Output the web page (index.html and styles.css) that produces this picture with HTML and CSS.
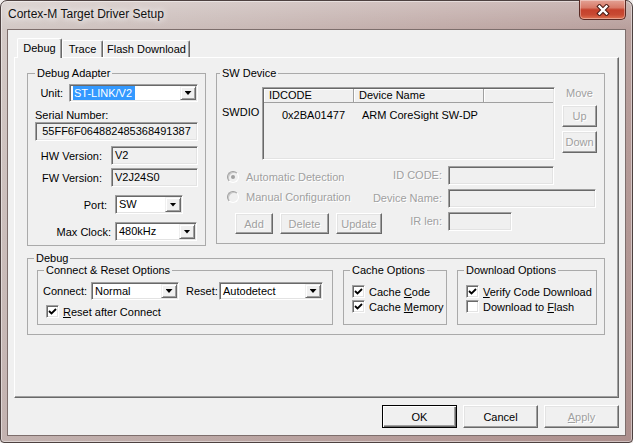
FILE: index.html
```html
<!DOCTYPE html>
<html lang="en">
<head>
    <meta charset="UTF-8">
    <title>Cortex-M Target Driver Setup</title>
    <link rel="stylesheet" href="styles.css">
</head>
<body>
<div class="window">
    <div class="titlebar">
        <span class="title">Cortex-M Target Driver Setup</span>
        <div class="close-btn">
            <svg width="14" height="12" viewBox="0 0 14 12">
                <path d="M3.5 2.5 L10.5 9.5 M10.5 2.5 L3.5 9.5" stroke="#4b1c16" stroke-width="4.4" stroke-linecap="square"/>
                <path d="M3.5 2.5 L10.5 9.5 M10.5 2.5 L3.5 9.5" stroke="#fff" stroke-width="2.4" stroke-linecap="square"/>
            </svg>
        </div>
    </div>

    <div class="client">
        <div class="tabs">
            <div class="tab active tab-debug">Debug</div>
            <div class="tab tab-trace">Trace</div>
            <div class="tab tab-flash">Flash Download</div>
        </div>

        <div class="page">
            <div class="top-row">
                <!-- Debug Adapter -->
                <fieldset class="group adapter">
                    <legend>Debug Adapter</legend>
                    <div class="body">
                        <div class="row r-unit">
                            <span class="lbl lbl-unit">Unit:</span>
                            <div class="combo sunken w-unit">
                                <span class="value"><span class="hilite">ST-LINK/V2</span></span>
                                <span class="drop"></span>
                            </div>
                        </div>
                        <div class="serial-label">Serial Number:</div>
                        <div class="field sunken serial">55FF6F064882485368491387</div>
                        <div class="row r-hw">
                            <span class="lbl lbl-ver">HW Version:</span>
                            <div class="field sunken w-ver">V2</div>
                        </div>
                        <div class="row r-fw">
                            <span class="lbl lbl-ver">FW Version:</span>
                            <div class="field sunken w-ver">V2J24S0</div>
                        </div>
                        <div class="row r-port">
                            <span class="lbl lbl-port">Port:</span>
                            <div class="combo sunken w-port">
                                <span class="value">SW</span>
                                <span class="drop"></span>
                            </div>
                        </div>
                        <div class="row r-clock">
                            <span class="lbl lbl-clock">Max Clock:</span>
                            <div class="combo sunken w-clock">
                                <span class="value">480kHz</span>
                                <span class="drop"></span>
                            </div>
                        </div>
                    </div>
                </fieldset>

                <!-- SW Device -->
                <fieldset class="group swdev">
                    <legend>SW Device</legend>
                    <div class="body">
                        <div class="sw-top">
                            <div class="swdio">SWDIO</div>
                            <div class="list sunken">
                                <div class="list-head">
                                    <div class="col c1">IDCODE</div>
                                    <div class="col c2">Device Name</div>
                                    <div class="col c3"></div>
                                </div>
                                <div class="list-row">
                                    <div class="c1">0x2BA01477</div>
                                    <div class="c2">ARM CoreSight SW-DP</div>
                                </div>
                            </div>
                            <div class="move">
                                <div class="move-label disabled">Move</div>
                                <div class="btn disabled btn-up">Up</div>
                                <div class="btn disabled btn-down">Down</div>
                            </div>
                        </div>

                        <div class="sw-grid">
                            <div class="radios">
                                <div class="radio-row disabled"><span class="radio checked"></span>Automatic Detection</div>
                                <div class="radio-row disabled"><span class="radio"></span>Manual Configuration</div>
                            </div>
                            <div class="f-label disabled">ID CODE:</div>
                            <div class="field sunken f-id"></div>
                            <div class="f-label disabled">Device Name:</div>
                            <div class="field sunken f-name"></div>
                            <div class="sw-buttons">
                                <div class="btn disabled w-add">Add</div>
                                <div class="btn disabled w-delete">Delete</div>
                                <div class="btn disabled w-update">Update</div>
                            </div>
                            <div class="f-label disabled">IR len:</div>
                            <div class="field sunken f-ir"></div>
                        </div>
                    </div>
                </fieldset>
            </div>

            <!-- Debug -->
            <fieldset class="group debug">
                <legend>Debug</legend>
                <div class="body">
                    <fieldset class="group connect">
                        <legend>Connect &amp; Reset Options</legend>
                        <div class="body">
                            <div class="row conn-row">
                                <span class="lbl lbl-connect">Connect:</span>
                                <div class="combo sunken w-connect">
                                    <span class="value">Normal</span>
                                    <span class="drop"></span>
                                </div>
                                <span class="lbl lbl-reset">Reset:</span>
                                <div class="combo sunken w-reset">
                                    <span class="value">Autodetect</span>
                                    <span class="drop"></span>
                                </div>
                            </div>
                            <div class="check-row reset-after">
                                <span class="check on"><svg width="9" height="9" viewBox="0 0 9 9"><path d="M1 4 L3.5 6.5 L8 2" fill="none" stroke="#000" stroke-width="1.8"/></svg></span>
                                <span><u>R</u>eset after Connect</span>
                            </div>
                        </div>
                    </fieldset>

                    <fieldset class="group cache">
                        <legend>Cache Options</legend>
                        <div class="body">
                            <div class="check-row">
                                <span class="check on"><svg width="9" height="9" viewBox="0 0 9 9"><path d="M1 4 L3.5 6.5 L8 2" fill="none" stroke="#000" stroke-width="1.8"/></svg></span>
                                <span>Cache <u>C</u>ode</span>
                            </div>
                            <div class="check-row">
                                <span class="check on"><svg width="9" height="9" viewBox="0 0 9 9"><path d="M1 4 L3.5 6.5 L8 2" fill="none" stroke="#000" stroke-width="1.8"/></svg></span>
                                <span>Cache <u>M</u>emory</span>
                            </div>
                        </div>
                    </fieldset>

                    <fieldset class="group download">
                        <legend>Download Options</legend>
                        <div class="body">
                            <div class="check-row">
                                <span class="check on"><svg width="9" height="9" viewBox="0 0 9 9"><path d="M1 4 L3.5 6.5 L8 2" fill="none" stroke="#000" stroke-width="1.8"/></svg></span>
                                <span><u>V</u>erify Code Download</span>
                            </div>
                            <div class="check-row">
                                <span class="check"></span>
                                <span>Download to <u>F</u>lash</span>
                            </div>
                        </div>
                    </fieldset>
                </div>
            </fieldset>
        </div>

        <div class="actions">
            <div class="btn btn-default">OK</div>
            <div class="btn">Cancel</div>
            <div class="btn disabled"><span><u>A</u>pply</span></div>
        </div>
    </div>
</div>
</body>
</html>
```

FILE: styles.css
```css
* {
    box-sizing: border-box;
}
html, body {
    margin: 0;
    padding: 0;
}
body {
    width: 633px;
    height: 443px;
    overflow: hidden;
    background: #f2eeed;
    font-family: "Liberation Sans", Arial, sans-serif;
    font-size: 11px;
    color: #000;
}

/* window frame */
.window {
    width: 633px;
    height: 443px;
    display: flex;
    flex-direction: column;
    border: 1px solid #4d4140;
    border-radius: 7px 7px 4px 4px;
    background:
        linear-gradient(180deg, rgba(255,255,255,0.25) 0, rgba(255,255,255,0) 28px),
        linear-gradient(180deg, rgba(0,0,0,0) 30px, rgba(110,60,60,0.16) 100%),
        linear-gradient(90deg, #d3c9c6 0%, #cabbb8 35%, #c1aba8 70%, #b89f9c 100%);
    box-shadow: inset 0 0 0 1px rgba(255,255,255,0.45);
}
.titlebar {
    height: 28px;
    display: flex;
    align-items: flex-start;
}
.title {
    padding-left: 7px;
    line-height: 27px;
    font-size: 12px;
    color: #111;
    text-shadow: 0 0 6px #fff, 0 0 10px rgba(255,255,255,0.9);
}
.close-btn {
    margin-left: auto;
    margin-right: 6px;
    margin-top: -1px;
    width: 47px;
    height: 20px;
    border: 1px solid #5a2a24;
    border-top: none;
    border-radius: 0 0 5px 5px;
    background: linear-gradient(180deg, #e3a295 0%, #d87a68 40%, #c5412c 52%, #c84a33 78%, #df7453 100%);
    box-shadow: inset 0 0 0 1px rgba(255,255,255,0.35);
    display: flex;
    align-items: center;
    justify-content: center;
}

.client {
    flex: 1;
    margin: 0 6px 6px;
    background: #f0f0f0;
    border: 1px solid #7d6e6c;
    display: flex;
    flex-direction: column;
}

/* tabs */
.tabs {
    height: 27px;
    margin: 0 6px;
    padding-left: 3px;
    display: flex;
    align-items: flex-end;
}
.tab {
    height: 17px;
    padding-top: 2px;
    line-height: 13px;
    text-align: center;
    background: #f0f0f0;
    border: 1px solid;
    border-color: #fff #696969 transparent #fff;
    border-bottom: none;
    border-radius: 2px 2px 0 0;
    box-shadow: inset -1px 0 0 #a0a0a0;
}
.tab.active {
    height: 20px;
    padding-top: 3px;
    margin-bottom: -1px;
    position: relative;
    z-index: 1;
}
.tab-debug { width: 45px; }
.tab-trace { width: 41px; }
.tab-flash { width: 87px; }

.page {
    height: 341px;
    margin: 0 6px;
    padding: 9px 0 0 12px;
    border: 1px solid;
    border-color: #fff #696969 #696969 #fff;
    box-shadow: inset -1px -1px 0 #a0a0a0;
}
.top-row {
    display: flex;
    align-items: flex-start;
    gap: 10px;
}

/* group boxes */
.group {
    margin: 0;
    padding: 0;
    min-width: 0;
    border: 1px solid #aaaaaa;
}
.group legend {
    margin-left: 5px;
    padding: 0 2px;
    line-height: 13px;
}

/* common controls */
.sunken {
    border: 1px solid;
    border-color: #a0a0a0 #fff #fff #a0a0a0;
    box-shadow: inset 1px 1px 0 #696969, inset -1px -1px 0 #e3e3e3;
}
.row {
    display: flex;
    align-items: center;
}
.lbl {
    flex: none;
    white-space: nowrap;
    text-align: right;
}
.combo {
    display: flex;
    flex: none;
    height: 19px;
    padding: 1px;
    background: #fff;
}
.combo .value {
    flex: 1;
    padding-left: 2px;
    line-height: 15px;
    white-space: nowrap;
    overflow: hidden;
}
.combo .drop {
    width: 16px;
    flex: none;
    display: flex;
    align-items: center;
    justify-content: center;
    background: #f0f0f0;
    border: 1px solid;
    border-color: #f0f0f0 #696969 #696969 #f0f0f0;
    box-shadow: inset 1px 1px 0 #fff, inset -1px -1px 0 #a0a0a0;
}
.combo .drop::after {
    content: "";
    width: 7px;
    height: 4px;
    background: #000;
    clip-path: polygon(0 0, 100% 0, 50% 100%);
}
.hilite {
    display: inline-block;
    padding: 0 3px 0 1px;
    background: #3399ff;
    color: #fff;
}
.field {
    height: 19px;
    padding: 0 3px;
    line-height: 17px;
    background: #f0f0f0;
    white-space: nowrap;
    flex: none;
}
.btn {
    flex: none;
    display: flex;
    align-items: center;
    justify-content: center;
    background: #f0f0f0;
    border: 1px solid;
    border-color: #fff #696969 #696969 #fff;
    box-shadow: inset -1px -1px 0 #a0a0a0, inset 1px 1px 0 #e3e3e3;
}
.disabled {
    color: #a0a0a0;
    text-shadow: 1px 1px 0 #fff;
}

/* Debug Adapter */
.adapter {
    width: 179px;
    flex: none;
}
.adapter legend {
    margin-left: 7px;
}
.adapter .body {
    padding: 4px 0 4px 7px;
}
.r-unit {
    height: 18px;
}
.r-unit .combo {
    height: 18px;
}
.r-unit .combo .value {
    line-height: 14px;
}
.lbl-unit { width: 28px; margin-right: 6px; }
.w-unit { width: 129px; }
.serial-label {
    margin-top: 7px;
    line-height: 13px;
}
.serial {
    width: 163px;
    text-align: center;
}
.r-hw { margin-top: 5px; }
.r-fw { margin-top: 3px; }
.lbl-ver { width: 67px; margin-right: 9px; }
.w-ver { width: 87px; }
.r-port { margin-top: 8px; }
.lbl-port { width: 72px; margin-right: 8px; }
.w-port { width: 68px; }
.r-clock { margin-top: 8px; }
.lbl-clock { width: 76px; margin-right: 4px; }
.w-clock { width: 82px; }

/* SW Device */
.swdev {
    width: 389px;
    flex: none;
}
.swdev legend {
    margin-left: 3px;
}
.swdev .body {
    padding: 7px 0 8px 5px;
}
.sw-top {
    display: flex;
    align-items: flex-start;
}
.swdio {
    width: 40px;
    padding-top: 19px;
    line-height: 13px;
}
.list {
    width: 293px;
    height: 73px;
    padding: 1px;
    background: #f0f0f0;
}
.list-head {
    display: flex;
    height: 14px;
    border-bottom: 1px solid #a0a0a0;
}
.list-head .col {
    line-height: 13px;
    padding-left: 5px;
    border-right: 1px solid #a0a0a0;
    box-shadow: inset 1px 1px 0 #fff;
}
.list .c1 { width: 90px; }
.list .c2 { width: 130px; }
.list .c3 { flex: 1; border-right: none; }
.list-row {
    display: flex;
    margin-top: 6px;
    line-height: 13px;
}
.list-row .c1 {
    text-align: right;
    padding-right: 9px;
}
.list-row .c2 {
    padding-left: 8px;
    white-space: nowrap;
}
.move {
    width: 35px;
    margin-left: 7px;
    display: flex;
    flex-direction: column;
}
.move-label {
    text-align: center;
    line-height: 13px;
}
.move .btn {
    height: 22px;
}
.btn-up { margin-top: 5px; }
.btn-down { margin-top: 4px; }

.sw-grid {
    margin-top: 6px;
    display: grid;
    grid-template-columns: 148px 78px auto;
    grid-template-rows: 23px 23px 23px;
}
.radios {
    grid-row: 1 / 3;
    grid-column: 1;
    padding-top: 1px;
}
.radio-row {
    height: 20px;
    display: flex;
    align-items: center;
    padding-left: 5px;
    gap: 7px;
}
.radio {
    width: 12px;
    height: 12px;
    border-radius: 50%;
    border: 1px solid;
    border-color: #a0a0a0 #fff #fff #a0a0a0;
    background: #f0f0f0;
    box-shadow: inset 1px 1px 0 #c8c8c8;
    display: flex;
    align-items: center;
    justify-content: center;
}
.radio.checked::after {
    content: "";
    width: 4px;
    height: 4px;
    border-radius: 50%;
    background: #a0a0a0;
}
.f-label {
    grid-column: 2;
    text-align: right;
    padding-right: 6px;
    line-height: 19px;
    white-space: nowrap;
}
.sw-grid .field {
    grid-column: 3;
    align-self: start;
}
.f-id { width: 106px; }
.f-name { width: 148px; }
.f-ir { width: 64px; }
.sw-buttons {
    grid-row: 3;
    grid-column: 1;
    align-self: start;
    margin-top: 1px;
    padding-left: 13px;
    display: flex;
    gap: 7px;
}
.sw-buttons .btn {
    height: 21px;
}
.w-add { width: 38px; }
.w-delete { width: 49px; }
.w-update { width: 46px; }

/* Debug */
.group.debug {
    width: 578px;
    margin-top: 6px;
}
.debug legend {
    margin-left: 6px;
}
.debug > .body {
    display: flex;
    gap: 10px;
    margin-top: -1px;
    padding: 0 0 9px 9px;
}
.connect { width: 296px; }
.connect .body {
    padding: 5px 0 6px 5px;
}
.conn-row {
    height: 18px;
}
.conn-row .combo {
    height: 18px;
}
.conn-row .combo .value {
    line-height: 14px;
}
.lbl-connect { width: 48px; text-align: left; }
.w-connect { width: 88px; }
.lbl-reset { width: 33px; margin-left: 7px; text-align: left; }
.w-reset { width: 104px; }

.check-row {
    height: 15px;
    display: flex;
    align-items: center;
    gap: 4px;
    white-space: nowrap;
}
.reset-after {
    margin-top: 5px;
    height: 13px;
    padding-left: 3px;
}
.check {
    width: 13px;
    height: 13px;
    flex: none;
    background: #fff;
    border: 1px solid;
    border-color: #a0a0a0 #fff #fff #a0a0a0;
    box-shadow: inset 1px 1px 0 #696969, inset -1px -1px 0 #e3e3e3;
    display: flex;
    align-items: center;
    justify-content: center;
}
.cache { width: 104px; }
.download { width: 140px; }
.cache .body,
.download .body {
    padding: 7px 0 0 8px;
}

/* dialog buttons */
.actions {
    margin-top: 7px;
    padding-right: 6px;
    display: flex;
    justify-content: flex-end;
    gap: 6px;
}
.actions .btn {
    width: 75px;
    height: 23px;
}
.btn-default {
    border-color: #000;
    box-shadow: inset 1px 1px 0 #fff, inset -1px -1px 0 #696969, inset -2px -2px 0 #a0a0a0;
}
```
